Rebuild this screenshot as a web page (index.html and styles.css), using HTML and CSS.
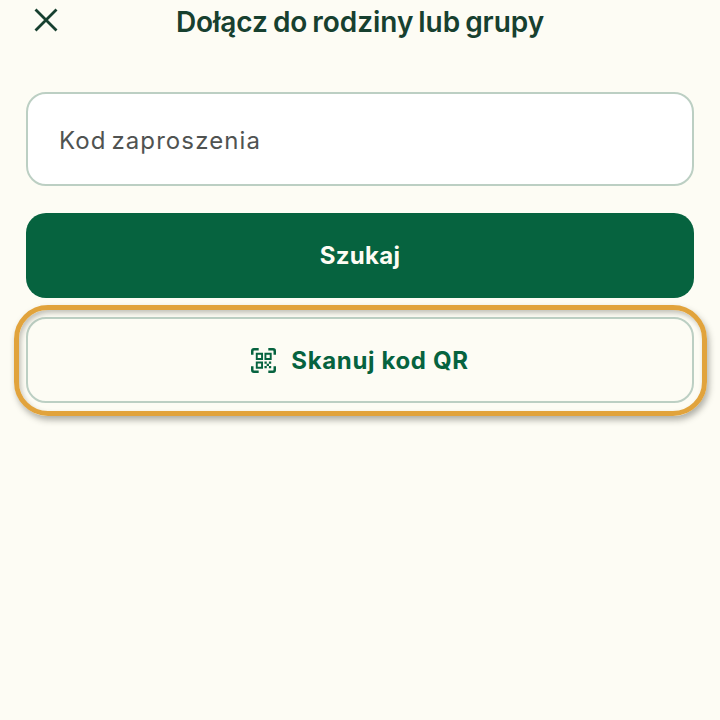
FILE: index.html
```html
<!DOCTYPE html>
<html lang="pl">
<head>
	<meta charset="UTF-8">
	<title>Dołącz do rodziny lub grupy</title>
	<link rel="stylesheet" href="styles.css">
</head>
<body>
	<div class="header">
		<svg class="close" viewBox="0 0 24 24" width="24" height="24">
			<path d="M1.5 1.5 L22.5 22.5 M22.5 1.5 L1.5 22.5" fill="none" stroke="#17402f" stroke-width="2.8"/>
		</svg>
		<h1>Dołącz do rodziny lub grupy</h1>
	</div>
	<div class="content">
		<div class="field">Kod zaproszenia</div>
		<div class="btn search">Szukaj</div>
		<div class="btn scan">
			<svg class="qr" viewBox="0 0 26 26" width="25" height="25">
				<path d="M1.3 7 V3 Q1.3 1.3 3 1.3 H8 M18 1.3 H23 Q24.7 1.3 24.7 3 V7 M1.3 19 V23 Q1.3 24.7 3 24.7 H8 M18 24.7 H23 Q24.7 24.7 24.7 23 V19" fill="none" stroke="#06633f" stroke-width="2.6"/>
				<path d="M6 6 H11.5 V11.5 H6 Z M15 6 H20.5 V11.5 H15 Z M6 15 H11.5 V20.5 H6 Z" fill="none" stroke="#06633f" stroke-width="2"/>
				<path d="M14 14 h2.4 v2.4 h-2.4 Z M18.6 14 h2.4 v2.4 h-2.4 Z M16.3 16.3 h2.4 v2.4 h-2.4 Z M14 18.6 h2.4 v2.4 h-2.4 Z M18.6 18.6 h2.4 v2.4 h-2.4 Z" fill="#06633f"/>
			</svg>
			<span>Skanuj kod QR</span>
		</div>
	</div>
</body>
</html>
```

FILE: styles.css
```css
*{
	margin:0;
	padding:0;
	box-sizing:border-box;
}
body{
	background:#fdfcf4;
	font-family:"Inter","Liberation Sans",sans-serif;
	height:720px;
	overflow:hidden;
}
.header{
	position:relative;
	height:44px;
	display:flex;
	align-items:center;
	justify-content:center;
}
.header h1{
	font-size:28px;
	line-height:44px;
	font-weight:600;
	color:#17402f;
	letter-spacing:-0.05px;
	word-spacing:-2px;
}
.close{
	position:absolute;
	left:34px;
	top:8px;
}
.content{
	padding:48px 26px 0;
	display:flex;
	flex-direction:column;
}
.field{
	height:94px;
	background:#fff;
	border:2.5px solid #bccfc3;
	border-radius:20px;
	padding:3px 31px 0;
	display:flex;
	align-items:center;
	font-size:24px;
	letter-spacing:1.1px;
	word-spacing:-3px;
	color:#505351;
}
.btn{
	display:flex;
	align-items:center;
	justify-content:center;
	gap:15px;
	font-size:24px;
	font-weight:700;
	letter-spacing:0.3px;
	border-radius:20px;
}
.search{
	height:85px;
	margin-top:27px;
	background:#06633f;
	color:#fdfcf4;
}
.scan{
	position:relative;
	height:86px;
	margin-top:19px;
	border:2.5px solid #bccfc3;
	color:#06633f;
	letter-spacing:0.65px;
}
/* pomaranczowa ramka wokol przycisku */
.scan::after{
	content:"";
	position:absolute;
	inset:-14.5px;
	border:5.5px solid #e1a33c;
	border-radius:34px;
	box-shadow:2px 4px 6px rgba(60,60,50,.4), inset 2px 3px 5px rgba(60,60,50,.3);
}
```
